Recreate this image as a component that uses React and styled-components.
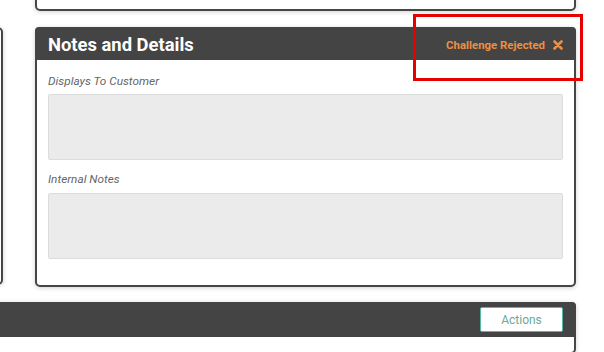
import React from "react";
import styled, { createGlobalStyle } from "styled-components";

const GlobalStyle = createGlobalStyle`
  html, body {
    margin: 0;
    padding: 0;
    background-color: #ffffff;
    font-family: Roboto, "Liberation Sans", sans-serif;
    overflow: hidden;
  }
`;

const Page = styled.div`
  width: 576px;
  position: relative;
`;

const Row = styled.div`
  display: flex;
  gap: 32px;
  align-items: flex-start;
`;

const Card = styled.div`
  background-color: #fff;
  border: 2px solid #464646;
  border-radius: 5px;
  box-shadow: 0 1px 5px rgba(0, 0, 0, 0.18);
  box-sizing: border-box;
`;

const SideCard = styled(Card)`
  width: 100px;
  margin-left: -97px;
  margin-top: 27px;
  height: 258px;
  flex-shrink: 0;
`;

const Column = styled.div`
  flex: 1;
  display: flex;
  flex-direction: column;
  gap: 16px;
`;

const TopCard = styled(Card)`
  height: 60px;
  margin-top: -49px;
`;

const PanelHeader = styled.div`
  background-color: #444;
  height: 31px;
  display: flex;
  align-items: center;
  justify-content: space-between;
  padding: 2px 12px 0 11px;
  margin: -2px -2px 0 -2px;
  border-radius: 4px 4px 0 0;
`;

const Title = styled.h2`
  margin: 0;
  color: #fff;
  font-size: 18.4px;
  font-weight: 700;
  padding-left: 2px;
`;

const Status = styled.span`
  color: #ea8f45;
  font-size: 11.4px;
  font-weight: 700;
  display: flex;
  align-items: center;
  gap: 8px;
  padding-right: 1px;
`;

const Body = styled.div`
  padding: 14px 11px 26px 11px;
`;

const Label = styled.div`
  font-size: 11.8px;
  font-style: italic;
  color: #666;
  line-height: 14px;
  margin-bottom: ${(p) => p.$gap || 6}px;
`;

const NoteBox = styled.textarea`
  display: block;
  width: 100%;
  height: 66px;
  box-sizing: border-box;
  background-color: #ebebeb;
  border: 1px solid #dcdcdc;
  border-radius: 2px;
  resize: none;
  margin-bottom: ${(p) => p.$after || 0}px;
`;

const Highlight = styled.div`
  position: absolute;
  left: 413px;
  top: 14px;
  width: 170px;
  height: 67px;
  border: 3px solid #e60000;
  box-sizing: border-box;
  pointer-events: none;
`;

const BottomPanel = styled(Card)`
  margin-top: 15px;
  margin-left: -20px;
  height: 52px;
  border-left: none;
`;

const BottomHeader = styled(PanelHeader)`
  height: 35px;
  justify-content: flex-end;
  padding: 0 13px 0 0;
  margin-left: 0;
`;

const ActionButton = styled.button`
  width: 83px;
  height: 25px;
  background-color: #fff;
  border: 1px solid #5cb7a2;
  border-radius: 2px;
  color: #6aa99b;
  font-family: Roboto, "Liberation Sans", sans-serif;
  font-size: 12px;
`;

const CrossIcon = () => (
  <svg width="10" height="10" viewBox="0 0 10 10">
    <path
      d="M1.5 1.5 L8.5 8.5 M8.5 1.5 L1.5 8.5"
      stroke="currentColor"
      strokeWidth="2.6"
      strokeLinecap="round"
    />
  </svg>
);

export default function App() {
  return (
    <Page>
      <GlobalStyle />
      <Row>
        <SideCard />
        <Column>
          <TopCard />
          <Card>
            <PanelHeader>
              <Title>Notes and Details</Title>
              <Status>
                Challenge Rejected <CrossIcon />
              </Status>
            </PanelHeader>
            <Body>
              <Label>Displays To Customer</Label>
              <NoteBox $after={12} />
              <Label $gap={7}>Internal Notes</Label>
              <NoteBox />
            </Body>
          </Card>
        </Column>
      </Row>
      <BottomPanel>
        <BottomHeader>
          <ActionButton>Actions</ActionButton>
        </BottomHeader>
      </BottomPanel>
      <Highlight />
    </Page>
  );
}
